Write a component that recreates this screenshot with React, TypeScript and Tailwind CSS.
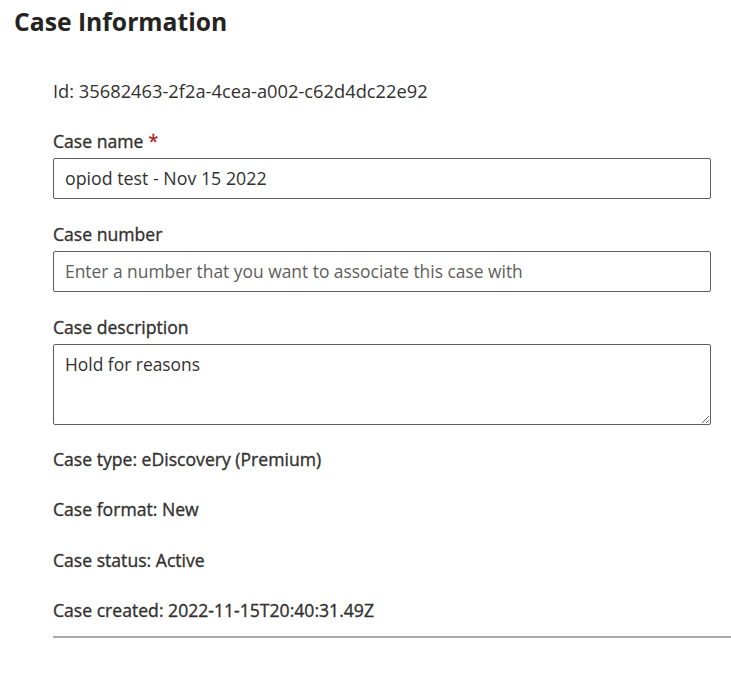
import React from "react";

const font = { fontFamily: '"Open Sans", "Noto Sans", sans-serif' };

function Label({ children, required }: { children: React.ReactNode; required?: boolean }) {
  return (
    <div className="text-[17.6px] leading-[24px] text-[#323130] [-webkit-text-stroke:0.35px_#323130]">
      {children}
      {required && <span className="text-[#a4262c] ml-[5px] [-webkit-text-stroke:0.35px_#a4262c]">*</span>}
    </div>
  );
}

export default function App() {
  return (
    <div className="bg-white w-[731px] h-[691px] text-[#323130]" style={font}>
      <h1 className="pl-[14px] pt-[6px] text-[24.7px] leading-[32px] font-bold text-[#252423]">Case Information</h1>
      <div className="ml-[53px] w-[658px] flex flex-col">
        <div className="mt-[41px] text-[18.3px] leading-[24px]">Id: 35682463-2f2a-4cea-a002-c62d4dc22e92</div>

        <div className="mt-[26px]">
          <Label required>Case name</Label>
        </div>
        <div className="mt-[5px] h-[41px] border-[1.5px] border-[#605e5c] rounded-[2px] flex items-center px-[11px] text-[17.8px] text-[#323130]">
          opiod test - Nov 15 2022
        </div>

        <div className="mt-[23px]">
          <Label>Case number</Label>
        </div>
        <div className="mt-[5px] h-[41px] border-[1.5px] border-[#605e5c] rounded-[2px] flex items-center px-[11px] text-[17.4px] text-[#605e5c]">
          Enter a number that you want to associate this case with
        </div>

        <div className="mt-[23px]">
          <Label>Case description</Label>
        </div>
        <textarea
          readOnly
          value="Hold for reasons"
          className="mt-[5px] h-[81px] border-[1.5px] border-[#605e5c] rounded-[2px] px-[11px] pt-[7px] text-[17.4px] leading-[24px] text-[#323130] resize-y outline-none"
          style={font}
        />

        <div className="mt-[22px]"><Label>Case type: eDiscovery (Premium)</Label></div>
        <div className="mt-[26px]"><Label>Case format: New</Label></div>
        <div className="mt-[27px]"><Label>Case status: Active</Label></div>
        <div className="mt-[26px]"><Label>Case created: 2022-11-15T20:40:31.49Z</Label></div>
      </div>
      <div className="mt-[14px] ml-[53px] h-[2px] bg-[#a8a8a8]" />
    </div>
  );
}
